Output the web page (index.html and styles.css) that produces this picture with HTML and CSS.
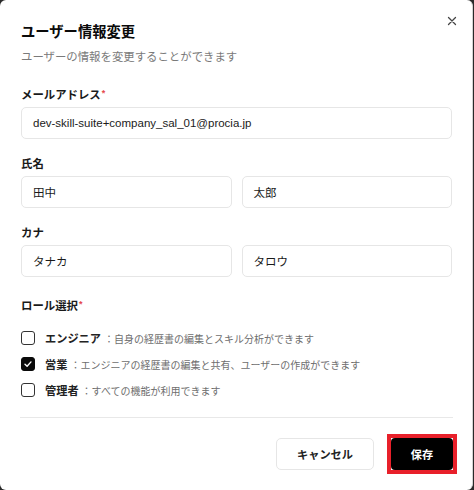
FILE: index.html
```html
<!DOCTYPE html>
<html lang="ja">
<head>
<meta charset="utf-8">
<link rel="stylesheet" href="styles.css">
</head>
<body>
<div class="dialog">
  <button class="close" aria-label="閉じる">
    <svg width="10" height="10" viewBox="0 0 10 10"><path d="M1.5 1.5 L8.5 8.5 M8.5 1.5 L1.5 8.5" stroke="#444" stroke-width="1.3" stroke-linecap="round" fill="none"/></svg>
  </button>
  <div class="header">
    <h2 class="title">ユーザー情報変更</h2>
    <p class="subtitle">ユーザーの情報を変更することができます</p>
  </div>

  <div class="field field-email">
    <label class="label">メールアドレス<span class="req">*</span></label>
    <div class="input">dev-skill-suite+company_sal_01@procia.jp</div>
  </div>

  <div class="field">
    <label class="label">氏名</label>
    <div class="row">
      <div class="input">田中</div>
      <div class="input">太郎</div>
    </div>
  </div>

  <div class="field">
    <label class="label">カナ</label>
    <div class="row">
      <div class="input">タナカ</div>
      <div class="input">タロウ</div>
    </div>
  </div>

  <div class="roles">
    <label class="label">ロール選択<span class="req">*</span></label>
    <ul class="role-list">
      <li class="role"><span class="box"></span><span class="role-name">エンジニア</span><span class="role-desc">：自身の経歴書の編集とスキル分析ができます</span></li>
      <li class="role"><span class="box checked"><svg width="10" height="10" viewBox="0 0 10 10"><path d="M2 5.2 L4.1 7.2 L8 2.9" stroke="#fff" stroke-width="1.4" fill="none" stroke-linecap="round" stroke-linejoin="round"/></svg></span><span class="role-name">営業</span><span class="role-desc">：エンジニアの経歴書の編集と共有、ユーザーの作成ができます</span></li>
      <li class="role"><span class="box"></span><span class="role-name">管理者</span><span class="role-desc">：すべての機能が利用できます</span></li>
    </ul>
  </div>

  <div class="divider"></div>

  <div class="footer">
    <button class="btn btn-cancel">キャンセル</button>
    <span class="highlight"><button class="btn btn-save">保存</button></span>
  </div>
</div>
</body>
</html>
```

FILE: styles.css
```css
* { box-sizing: border-box; }
html, body { margin: 0; padding: 0; }
body {
  background: #2a2a2a;
  width: 474px;
  height: 490px;
  overflow: hidden;
  font-family: "Liberation Sans", "Noto Sans CJK JP", sans-serif;
  color: #171717;
}
.dialog {
  position: relative;
  width: 473px;
  height: 490px;
  background: #fff;
  border-radius: 6px;
  border-right: 1px solid #d4d4d4;
  padding: 21px 20px 0 21px;
}
.close {
  position: absolute;
  top: 15px;
  right: 14px;
  width: 12px;
  height: 12px;
  padding: 1px;
  border: 0;
  background: none;
  display: flex;
  align-items: center;
  justify-content: center;
}
.header { margin-bottom: 22px; }
.title {
  margin: 0;
  font-size: 14.3px;
  line-height: 22px;
  font-weight: 700;
  color: #0a0a0a;
}
.subtitle {
  margin: 6px 0 0;
  font-size: 11.4px;
  line-height: 16px;
  color: #7a7a7a;
}
.field { margin-bottom: 17px; }
.label {
  display: block;
  font-size: 11.4px;
  line-height: 16px;
  font-weight: 700;
  color: #1a1a1a;
  margin-bottom: 4px;
}
.req { color: #e5484d; font-size: 9px; vertical-align: top; line-height: 12px; margin-left: 1px; }
.input {
  height: 32px;
  border: 1px solid #e6e6e6;
  border-radius: 5px;
  padding: 0 11px;
  display: flex;
  align-items: center;
  font-size: 11.5px;
  color: #1a1a1a;
}
.row {
  display: grid;
  grid-template-columns: 1fr 1fr;
  gap: 10px;
}
.roles { margin-top: 21px; }
.role-list {
  list-style: none;
  margin: 11px 0 0;
  padding: 0;
}
.role {
  height: 26px;
  display: flex;
  align-items: center;
}
.box {
  width: 14px;
  height: 14px;
  border: 1.3px solid #333;
  border-radius: 3px;
  margin-right: 10px;
  display: flex;
  align-items: center;
  justify-content: center;
  flex: none;
}
.box.checked { background: #0a0a0a; border-color: #0a0a0a; }
.role-name {
  font-size: 11.2px;
  font-weight: 700;
  color: #222;
}
.role-desc {
  font-size: 10px;
  color: #6e6e6e;
  margin-left: 3px;
}
.divider {
  height: 1px;
  background: #e8e8e8;
  margin: 14px -1px 0 -1px;
}
.footer {
  display: flex;
  justify-content: flex-end;
  align-items: center;
  margin-top: 20px;
}
.btn {
  height: 32px;
  border-radius: 5px;
  font-family: inherit;
  font-size: 11.2px;
  font-weight: 700;
  display: flex;
  align-items: center;
  justify-content: center;
}
.btn-cancel {
  width: 98px;
  background: #fff;
  border: 1px solid #e6e6e6;
  color: #222;
}
.highlight {
  display: block;
  border: 4px solid #e8202a;
  background: #fff;
  margin: -4px -5px -4px 13px;
}
.btn-save {
  width: 62px;
  background: #000;
  border: 0;
  color: #fff;
  border-radius: 4px;
}
```
